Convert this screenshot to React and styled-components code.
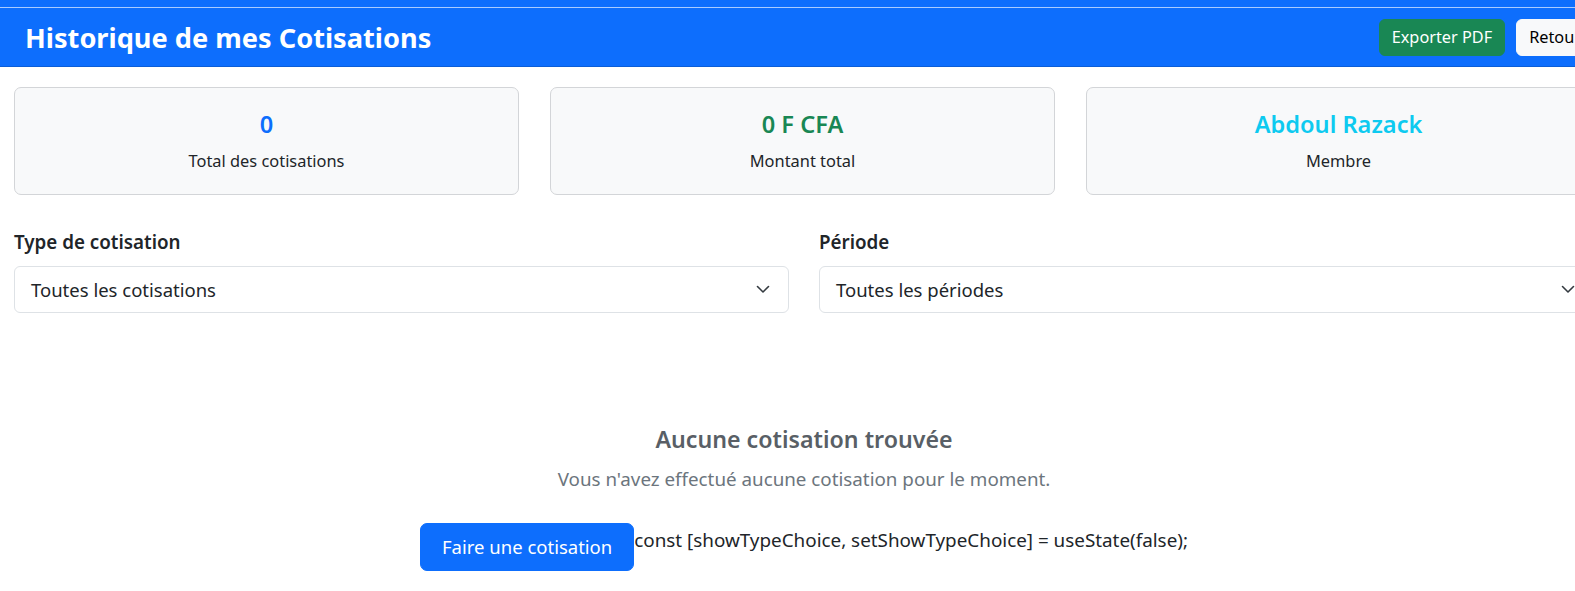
import React from "react";
import styled, { createGlobalStyle } from "styled-components";

const Global = createGlobalStyle`
  html, body { margin: 0; padding: 0; overflow: hidden; background: #fff; }
  body {
    font-family: "Noto Sans", "Open Sans", sans-serif;
    font-size: 16px;
    line-height: 1.5;
    color: #212529;
  }
  * { box-sizing: border-box; }
`;

const Page = styled.div`
  width: 1608px;
`;

const TopRule = styled.div`
  height: 8px;
  background: #0d6efd;
  border-bottom: 1px solid #a9cbff;
`;

const HeaderBar = styled.header`
  height: 59px;
  background: #0d6efd;
  border-bottom: 1px solid #0b5ed7;
  display: flex;
  align-items: center;
  justify-content: space-between;
  padding: 3px 14px 0 25px;
`;

const Title = styled.h1`
  margin: 0;
  font-size: 27.2px;
  font-weight: 700;
  color: #fff;
  line-height: 1.2;
`;

const Actions = styled.div`
  display: flex;
  gap: 11px;
  margin-top: -2px;
`;

const Btn = styled.button`
  font-family: inherit;
  font-size: 16.3px;
  line-height: 1.5;
  height: 37px;
  padding: 0 12px;
  border-radius: 6px;
  border: 1px solid ${(p) => (p.$variant === "success" ? "#198754" : "#f8f9fa")};
  background: ${(p) => (p.$variant === "success" ? "#198754" : "#f8f9fa")};
  color: ${(p) => (p.$variant === "success" ? "#fff" : "#000")};
  cursor: pointer;
`;

const Main = styled.main`
  padding: 20px 14px 0;
`;

const Stats = styled.div`
  display: grid;
  grid-template-columns: repeat(3, 505px);
  gap: 31px;
`;

const StatCard = styled.div`
  height: 108px;
  background: #f8f9fa;
  border: 1px solid #d3d5d8;
  border-radius: 7px;
  display: flex;
  flex-direction: column;
  align-items: center;
  padding-top: 22px;
`;

const StatValue = styled.div`
  font-size: 23.6px;
  font-weight: 600;
  line-height: 29px;
  color: ${(p) => p.$color};
`;

const StatLabel = styled.div`
  margin-top: 10px;
  font-size: 16.4px;
  line-height: 24px;
  color: #212529;
`;

const Filters = styled.div`
  display: grid;
  grid-template-columns: repeat(2, 1fr);
  gap: 30px;
  margin-top: 35px;
`;

const Field = styled.div`
  display: flex;
  flex-direction: column;
`;

const Label = styled.label`
  font-size: 18.8px;
  font-weight: 600;
  line-height: 24px;
  margin-bottom: 12px;
`;

const SelectBox = styled.div`
  height: 47px;
  border: 1px solid #dee2e6;
  border-radius: 6px;
  background: #fff;
  display: flex;
  align-items: center;
  justify-content: space-between;
  padding: 0 18px 0 16px;
  font-size: 18.5px;
  color: #212529;
`;

const Chevron = () => (
  <svg width="14" height="9" viewBox="0 0 14 9" fill="none">
    <path d="M1.5 1.5l5.5 5.5 5.5-5.5" stroke="#343a40" strokeWidth="1.6" strokeLinecap="round" strokeLinejoin="round" />
  </svg>
);

const Empty = styled.section`
  margin-top: 112px;
  display: flex;
  flex-direction: column;
  align-items: center;
  color: #595f66;
`;

const EmptyTitle = styled.h2`
  margin: 0;
  font-size: 23.2px;
  font-weight: 600;
  line-height: 29px;
`;

const EmptyText = styled.p`
  margin: 10px 0 0;
  font-size: 18.8px;
  line-height: 30px;
  color: #6c757d;
`;

const ActionRow = styled.div`
  margin-top: 29px;
  display: flex;
  align-items: flex-start;
  justify-content: center;
`;

const BigBtn = styled.button`
  font-family: inherit;
  font-size: 18.5px;
  line-height: 30px;
  padding: 8px 21px;
  height: 48px;
  border-radius: 7px;
  border: 1px solid #0d6efd;
  background: #0d6efd;
  color: #fff;
  cursor: pointer;
`;

const CodeText = styled.span`
  font-size: 18.85px;
  line-height: 27px;
  padding-top: 4px;
  color: #212529;
`;

export default function App() {
  return (
    <Page>
      <Global />
      <TopRule />
      <HeaderBar>
        <Title>Historique de mes Cotisations</Title>
        <Actions>
          <Btn $variant="success">Exporter PDF</Btn>
          <Btn $variant="light">Retour</Btn>
        </Actions>
      </HeaderBar>
      <Main>
        <Stats>
          <StatCard>
            <StatValue $color="#0d6efd">0</StatValue>
            <StatLabel>Total des cotisations</StatLabel>
          </StatCard>
          <StatCard>
            <StatValue $color="#198754">0 F CFA</StatValue>
            <StatLabel>Montant total</StatLabel>
          </StatCard>
          <StatCard>
            <StatValue $color="#0dcaf0">Abdoul Razack</StatValue>
            <StatLabel>Membre</StatLabel>
          </StatCard>
        </Stats>
        <Filters>
          <Field>
            <Label>Type de cotisation</Label>
            <SelectBox>
              <span>Toutes les cotisations</span>
              <Chevron />
            </SelectBox>
          </Field>
          <Field>
            <Label>Période</Label>
            <SelectBox>
              <span>Toutes les périodes</span>
              <Chevron />
            </SelectBox>
          </Field>
        </Filters>
        <Empty>
          <EmptyTitle>Aucune cotisation trouvée</EmptyTitle>
          <EmptyText>Vous n'avez effectué aucune cotisation pour le moment.</EmptyText>
          <ActionRow>
            <BigBtn>Faire une cotisation</BigBtn>
            <CodeText>const [showTypeChoice, setShowTypeChoice] = useState(false);</CodeText>
          </ActionRow>
        </Empty>
      </Main>
    </Page>
  );
}
